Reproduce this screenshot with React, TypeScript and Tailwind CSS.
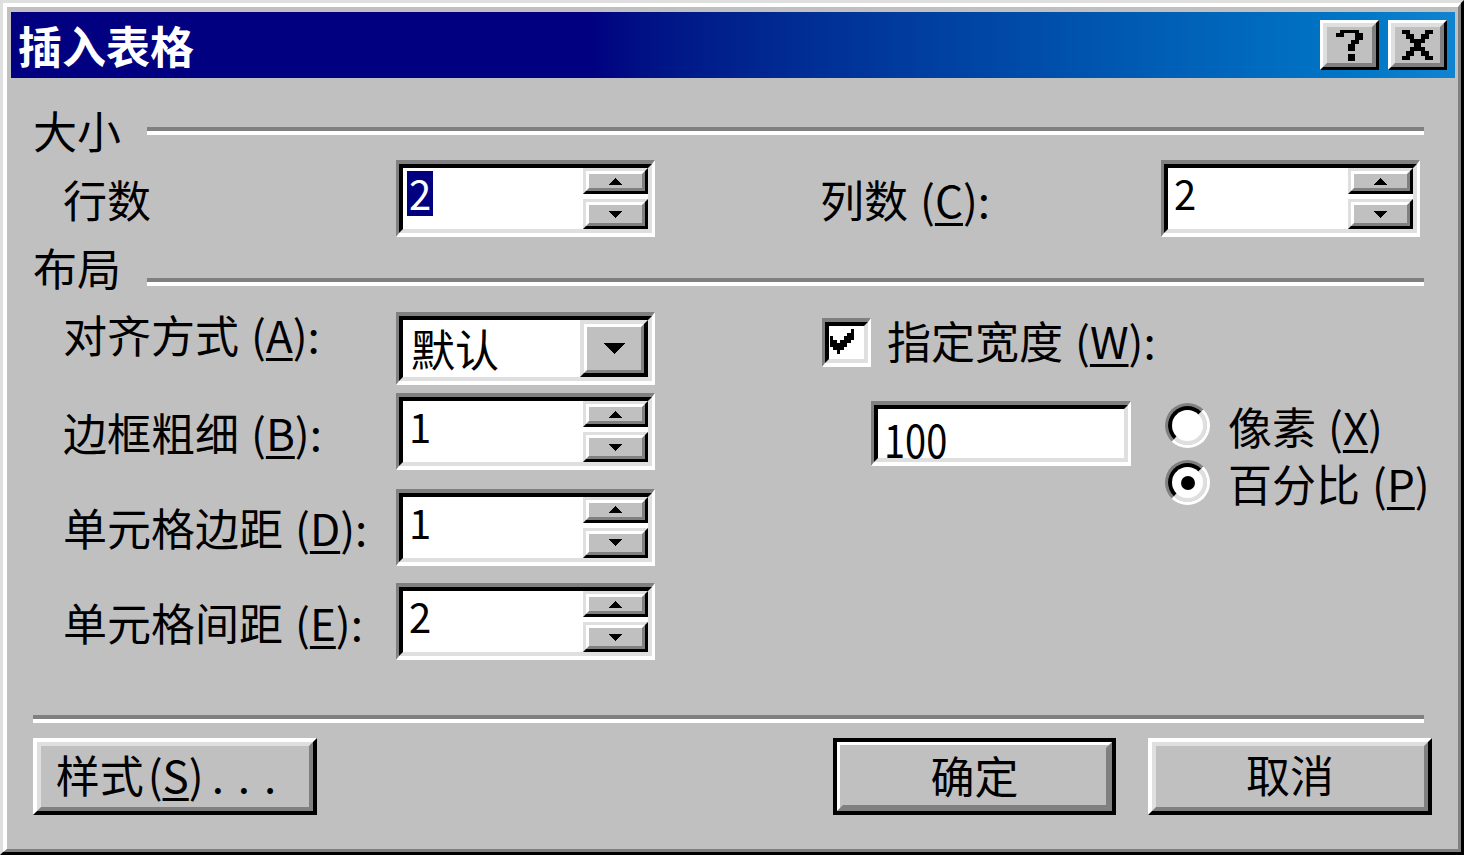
import React from "react";

function Pixels({ rows, w, h, color = "#000" }: { rows: string[]; w: number; h: number; color?: string }) {
  const cols = rows[0].length;
  return (
    <svg className="block" width={w} height={h} viewBox={`0 0 ${cols} ${rows.length}`} preserveAspectRatio="none" shapeRendering="crispEdges">
      {rows.flatMap((r, y) =>
        r.split("").map((c, x) => (c === "X" ? <rect key={`${x}-${y}`} x={x} y={y} width={1} height={1} fill={color} /> : null))
      )}
    </svg>
  );
}

const QMARK = [
  ".XXXXX.",
  "XX...XX",
  ".....XX",
  "....XX.",
  "...XX..",
  "...XX..",
  ".......",
  "...XX..",
  "...XX..",
];

const XMARK = [
  "XX....XX",
  ".XX..XX.",
  "..XXXX..",
  "...XX...",
  "..XXXX..",
  ".XX..XX.",
  "XX....XX",
];

const CHECK = [
  "......X",
  ".....XX",
  "X...XXX",
  "XX.XXX.",
  "XXXXX..",
  ".XXX...",
  "..X....",
];

function U({ children }: { children: React.ReactNode }) {
  return <span className="underline decoration-[3px] underline-offset-[5px]">{children}</span>;
}

function Acc({ k, dots = false }: { k: string; dots?: boolean }) {
  return (
    <span className="ml-[12px]">
      (<U>{k}</U>){dots ? "" : ":"}
    </span>
  );
}

function SpinButton({ className, down = false }: { className: string; down?: boolean }) {
  return (
    <div className={`w-full border-[3px] border-t-[#dfdfdf] border-l-[#dfdfdf] border-b-black border-r-black ${className}`}>
      <div className="w-full h-full border-[3px] border-t-white border-l-white border-b-[#808080] border-r-[#808080] bg-[#c0c0c0] flex items-center justify-center">
        <svg width="13" height="7" viewBox="0 0 13 7" shapeRendering="crispEdges">
          {down ? <polygon points="0,0 13,0 6.5,7" fill="#000" /> : <polygon points="6.5,0 13,7 0,7" fill="#000" />}
        </svg>
      </div>
    </div>
  );
}

function SpinBox({ value, selected = false }: { value: string; selected?: boolean }) {
  return (
    <div className="w-[259px] h-[77px] border-t-[4px] border-l-[3px] border-b-[4px] border-r-[3px] border-t-[#808080] border-l-[#808080] border-b-white border-r-white">
      <div className="w-full h-full border-[4px] border-t-black border-l-black border-b-[#dfdfdf] border-r-[#dfdfdf] bg-white flex">
        <div className="flex-1 pt-[3px] pl-[4px]">
          <span
            className={`inline-block h-[45px] leading-[45px] px-[2px] text-[40px] ${selected ? "bg-[#000080] text-white" : "text-black"}`}
          >
            {value}
          </span>
        </div>
        <div className="w-[65px] h-full flex flex-col justify-between">
          <SpinButton className="h-[26px]" />
          <SpinButton className="h-[30px]" down />
        </div>
      </div>
    </div>
  );
}

function Dropdown({ value }: { value: string }) {
  return (
    <div className="w-[259px] h-[73px] border-t-[4px] border-l-[3px] border-b-[4px] border-r-[3px] border-t-[#808080] border-l-[#808080] border-b-white border-r-white">
      <div className="w-full h-full border-[4px] border-t-black border-l-black border-b-[#dfdfdf] border-r-[#dfdfdf] bg-white flex">
        <div className="flex-1 pt-[6px] pl-[8px] text-[44px] leading-none h-[44px]">{value}</div>
        <div className="w-[68px] h-full border-[4px] border-t-[#dfdfdf] border-l-[#dfdfdf] border-b-black border-r-black">
          <div className="w-full h-full border-[3px] border-t-white border-l-white border-b-[#808080] border-r-[#808080] bg-[#c0c0c0] flex items-center justify-center">
            <svg width="23" height="11" viewBox="0 0 23 11" shapeRendering="crispEdges">
              <polygon points="0,0 23,0 11.5,11" fill="#000" />
            </svg>
          </div>
        </div>
      </div>
    </div>
  );
}

function Radio({ checked = false }: { checked?: boolean }) {
  return (
    <div className="w-[45px] h-[45px] shrink-0 rounded-full border-[3px] border-t-[#808080] border-l-[#808080] border-b-white border-r-white">
      <div className="w-full h-full rounded-full border-[4px] border-t-black border-l-black border-b-[#dfdfdf] border-r-[#dfdfdf] bg-white flex items-center justify-center">
        {checked && <div className="w-[14px] h-[14px] rounded-full bg-black" />}
      </div>
    </div>
  );
}

function BigButton({ children, def = false, className = "" }: { children: React.ReactNode; def?: boolean; className?: string }) {
  if (def) {
    return (
      <div className={`h-[77px] border-[4px] border-black ${className}`}>
        <div className="w-full h-full border-[3px] border-t-white border-l-white border-b-[#808080] border-r-[#808080]">
          <div className="w-full h-full border-[3px] border-t-[#c0c0c0] border-l-[#c0c0c0] border-b-[#808080] border-r-[#808080] bg-[#c0c0c0] flex items-center justify-center pb-[4px] text-[44px] leading-none">
            {children}
          </div>
        </div>
      </div>
    );
  }
  return (
    <div className={`h-[77px] ${className}`}>
      <div className="w-full h-full border-[4px] border-t-white border-l-white border-b-black border-r-black">
        <div className="w-full h-full border-[4px] border-t-[#dfdfdf] border-l-[#dfdfdf] border-b-[#808080] border-r-[#808080] bg-[#c0c0c0] flex items-center justify-center pb-[6px] text-[44px] leading-none">
          {children}
        </div>
      </div>
    </div>
  );
}

function TitleButton({ children }: { children: React.ReactNode }) {
  return (
    <div className="w-[59px] h-[50px] border-[3px] border-t-white border-l-white border-b-black border-r-black">
      <div className="w-full h-full border-[4px] border-t-[#dfdfdf] border-l-[#dfdfdf] border-b-[#808080] border-r-[#808080] bg-[#c0c0c0] flex items-center justify-center">
        {children}
      </div>
    </div>
  );
}

function SectionHeader({ title, lineTop }: { title: string; lineTop: string }) {
  return (
    <div className="h-[44px] flex items-start">
      <div className="w-[114px] text-[44px] leading-none h-[44px]">{title}</div>
      <div className={`flex-1 mr-[8px] border-t-[4px] border-b-[4px] border-t-[#808080] border-b-white ${lineTop}`} />
    </div>
  );
}

export default function App() {
  return (
    <div className="w-[1464px] h-[855px] bg-[#c0c0c0] text-black font-['Noto_Sans_CJK_SC','Noto_Sans',sans-serif] border-t-[3px] border-l-[3px] border-b-[3px] border-r-[3px] border-t-[#dfdfdf] border-l-[#dfdfdf] border-b-black border-r-black overflow-hidden">
      <div className="w-full h-full flex flex-col border-t-[4px] border-l-[4px] border-b-[3px] border-r-[3px] border-t-white border-l-white border-b-[#808080] border-r-[#808080] pt-[5px] pl-[4px] pr-[3px]">
        {/* Title bar */}
        <div className="h-[66px] shrink-0 flex items-center bg-linear-to-r from-[#000080] from-40% to-[#1084d0] pl-[7px] pr-[8px]">
          <div className="text-white text-[44px] font-bold leading-none h-[44px]">插入表格</div>
          <div className="ml-auto flex gap-[9px]">
            <TitleButton>
              <Pixels rows={QMARK} w={27} h={31} />
            </TitleButton>
            <TitleButton>
              <Pixels rows={XMARK} w={31} h={30} />
            </TitleButton>
          </div>
        </div>

        {/* Body */}
        <div className="flex-1 flex flex-col pl-[22px] pr-[23px]">
          <div className="mt-[30px]">
            <SectionHeader title="大小" lineTop="mt-[19px]" />
          </div>

          <div className="mt-[8px] h-[77px] flex items-center pl-[30px]">
            <div className="w-[333px] text-[44px] leading-none h-[44px]">行数</div>
            <SpinBox value="2" selected />
            <div className="w-[165px]" />
            <div className="w-[341px] text-[44px] leading-none h-[44px] whitespace-nowrap">
              列数<Acc k="C" />
            </div>
            <SpinBox value="2" />
          </div>

          <div className="mt-[8px]">
            <SectionHeader title="布局" lineTop="mt-[33px]" />
          </div>

          <div className="mt-[23px] flex">
            {/* left column */}
            <div className="pl-[30px] flex flex-col">
              <div className="h-[73px] flex items-start">
                <div className="w-[333px] text-[44px] leading-none h-[44px] whitespace-nowrap">
                  对齐方式<Acc k="A" />
                </div>
                <Dropdown value="默认" />
              </div>
              <div className="mt-[8px] h-[77px] flex items-center">
                <div className="w-[333px] text-[44px] leading-none h-[44px] whitespace-nowrap">
                  边框粗细<Acc k="B" />
                </div>
                <SpinBox value="1" />
              </div>
              <div className="mt-[19px] h-[76px] flex items-center">
                <div className="w-[333px] text-[44px] leading-none h-[44px] whitespace-nowrap">
                  单元格边距<Acc k="D" />
                </div>
                <SpinBox value="1" />
              </div>
              <div className="mt-[18px] h-[77px] flex items-center">
                <div className="w-[333px] text-[44px] leading-none h-[44px] whitespace-nowrap">
                  单元格间距<Acc k="E" />
                </div>
                <SpinBox value="2" />
              </div>
            </div>

            {/* right column */}
            <div className="ml-[167px] flex flex-col">
              <div className="mt-[6px] flex items-start gap-[16px]">
                <div className="w-[49px] h-[49px] shrink-0 border-t-[4px] border-l-[3px] border-b-[4px] border-r-[3px] border-t-[#808080] border-l-[#808080] border-b-white border-r-white">
                  <div className="w-full h-full border-[4px] border-t-black border-l-black border-b-[#dfdfdf] border-r-[#dfdfdf] bg-white flex items-start pt-[3px] pl-[1px]">
                    <Pixels rows={CHECK} w={24} h={25} />
                  </div>
                </div>
                <div className="text-[44px] leading-none h-[44px] whitespace-nowrap">
                  指定宽度<Acc k="W" />
                </div>
              </div>

              <div className="mt-[34px] flex items-start">
                <div className="ml-[49px] w-[260px] h-[65px] shrink-0 border-t-[4px] border-l-[3px] border-b-[4px] border-r-[3px] border-t-[#808080] border-l-[#808080] border-b-white border-r-white">
                  <div className="w-full h-full border-[4px] border-t-black border-l-black border-b-[#dfdfdf] border-r-[#dfdfdf] bg-white pl-[6px] pt-[2px]">
                    <span className="inline-block h-[45px] leading-[45px] text-[38px] scale-y-120 origin-top">100</span>
                  </div>
                </div>
                <div className="ml-[34px] mt-[2px] flex flex-col gap-[12px]">
                  <div className="flex items-center gap-[18px]">
                    <Radio />
                    <div className="text-[44px] leading-none h-[44px] whitespace-nowrap">
                      像素<span className="ml-[12px]">(<U>X</U>)</span>
                    </div>
                  </div>
                  <div className="flex items-center gap-[18px]">
                    <Radio checked />
                    <div className="text-[44px] leading-none h-[44px] whitespace-nowrap">
                      百分比<span className="ml-[12px]">(<U>P</U>)</span>
                    </div>
                  </div>
                </div>
              </div>
            </div>
          </div>

          <div className="mt-[55px] mr-[8px] border-t-[4px] border-b-[4px] border-t-[#808080] border-b-white" />

          <div className="mt-[15px] flex">
            <BigButton className="w-[284px]">
              <span className="pr-[4px] whitespace-nowrap">
                样式<span className="ml-[4px]">(<U>S</U>)</span>
                <span className="tracking-[14px] ml-[8px]">...</span>
              </span>
            </BigButton>
            <BigButton def className="ml-auto w-[283px]">
              确定
            </BigButton>
            <BigButton className="ml-[32px] w-[284px]">取消</BigButton>
          </div>
        </div>
      </div>
    </div>
  );
}
